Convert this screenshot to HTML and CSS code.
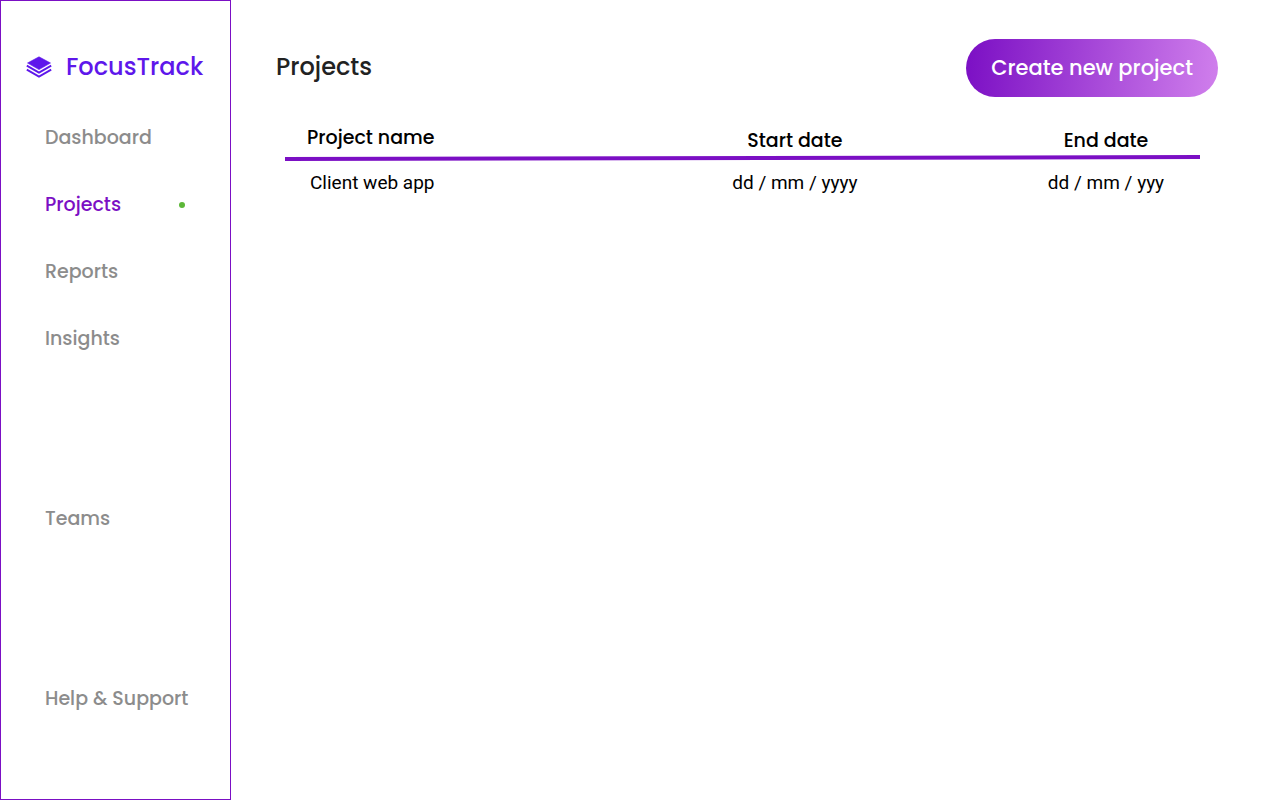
FILE: index.html
```html
<!DOCTYPE html>
<html lang="en">
<head>
  <meta charset="utf-8">
  <meta name="viewport" content="width=device-width, initial-scale=1">
  <title>FocusTrack</title>
  <link rel="stylesheet" href="styles.css">
</head>
<body>
  <div class="app">
    <aside class="sidebar">
      <a class="brand" href="#">
        <svg class="brand-icon" viewBox="0 0 26 22" aria-hidden="true">
          <path d="M13 .8 L24.5 7 L13 13.6 L1.5 7 Z" fill="currentColor" stroke="currentColor" stroke-width=".6" stroke-linejoin="round"/>
          <path d="M.8 9.6 L13 16.6 L25.2 9.6 M.8 13.6 L13 20.6 L25.2 13.6" fill="none" stroke="currentColor" stroke-width="1.8"/>
        </svg>
        <span>FocusTrack</span>
      </a>
      <nav class="nav">
        <a class="nav-link" href="#">Dashboard</a>
        <a class="nav-link active" href="#" aria-current="page">Projects<span class="dot"></span></a>
        <a class="nav-link" href="#">Reports</a>
        <a class="nav-link" href="#">Insights</a>
        <a class="nav-link apart" href="#">Teams</a>
        <a class="nav-link apart" href="#">Help &amp; Support</a>
      </nav>
    </aside>
    <main class="content">
      <header class="page-header">
        <h1 class="title">Projects</h1>
        <button class="create" type="button">Create new project</button>
      </header>
      <table class="projects">
        <thead>
          <tr>
            <th class="col-name" scope="col">Project name</th>
            <th class="col-start" scope="col">Start date</th>
            <th class="col-end" scope="col">End date</th>
          </tr>
          <tr aria-hidden="true">
            <td class="rule-cell" colspan="3">
              <svg class="rule" viewBox="0 0 915 6" preserveAspectRatio="none"><path d="M0 2 L915 0 V4 L0 6 Z" fill="#7b0fc4"/></svg>
            </td>
          </tr>
        </thead>
        <tbody>
          <tr>
            <td class="col-name">Client web app</td>
            <td>dd / mm / yyyy</td>
            <td>dd / mm / yyy</td>
          </tr>
        </tbody>
      </table>
    </main>
  </div>
</body>
</html>
```

FILE: styles.css
```css
* {
  box-sizing: border-box;
}

body {
  margin: 0;
  background: #fff;
  color: #000;
  font-family: Poppins, Inter, sans-serif;
}

.app {
  display: flex;
  min-height: 100vh;
}

.sidebar {
  display: flex;
  flex: 0 0 231px;
  flex-direction: column;
  min-width: 0;
  padding: 48px 25px 86px;
  border: 1px solid #7b0fc4;
}

.brand {
  display: flex;
  align-items: center;
  gap: 14px;
  color: #5e17eb;
  font-size: 24px;
  font-weight: 500;
  line-height: 36px;
  text-decoration: none;
}

.brand-icon {
  flex: none;
  width: 26px;
  height: 22px;
}

.nav {
  display: flex;
  flex: 1;
  flex-direction: column;
  gap: 39px;
  padding: 39px 20px 0 19px;
}

.nav-link {
  display: flex;
  align-items: center;
  justify-content: space-between;
  color: #8c8c8c;
  font-size: 19px;
  font-weight: 500;
  line-height: 28px;
  text-decoration: none;
  white-space: nowrap;
}

.nav-link.active {
  color: #7b0fc4;
}

.nav-link.apart {
  margin-top: auto;
}

.dot {
  width: 6px;
  height: 6px;
  border-radius: 50%;
  background: #5cb738;
}

.content {
  flex: 1;
  padding: 39px 62px 0 45px;
}

.page-header {
  display: flex;
  align-items: center;
  justify-content: space-between;
}

.title {
  margin: 0;
  padding-bottom: 2px;
  color: #222;
  font-size: 24px;
  font-weight: 500;
  line-height: 36px;
}

.create {
  padding: 12px 25px;
  border: 0;
  border-radius: 29px;
  background: linear-gradient(95deg, #7b0fc4, #d07fec);
  color: #fff;
  font: inherit;
  font-size: 21px;
  font-weight: 500;
  line-height: 34px;
}

.projects {
  width: calc(100% - 27px);
  margin: 27px 18px 0 9px;
  border-collapse: collapse;
  table-layout: fixed;
  text-align: center;
}

.projects th {
  padding: 3px 0 0;
  font-size: 19px;
  font-weight: 500;
  line-height: 28px;
}

.projects td {
  padding: 8px 0;
  font-family: Roboto, sans-serif;
  font-size: 19px;
  line-height: 28px;
}

.projects .col-name {
  padding-left: 25px;
  text-align: left;
}

.projects th.col-name {
  width: 32%;
  padding: 0 0 3px 22px;
}

.col-end {
  width: 188px;
}

.projects .rule-cell {
  padding: 0;
  line-height: 0;
}

.rule {
  width: 100%;
  height: 6px;
}
```
